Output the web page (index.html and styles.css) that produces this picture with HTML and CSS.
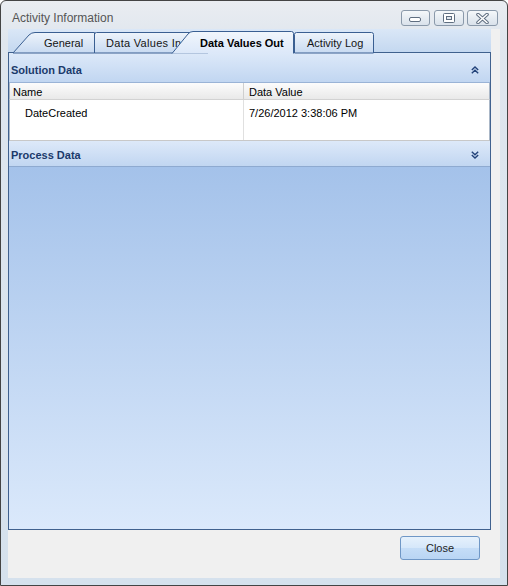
FILE: index.html
```html
<!DOCTYPE html>
<html>
<head>
<meta charset="utf-8">
<link rel="stylesheet" href="styles.css">
</head>
<body>
<div class="window">
  <div class="titlebar">
    <span class="title">Activity Information</span>
    <div class="caption">
      <div class="cbtn cbtn-min">
        <svg width="13" height="6" viewBox="0 0 13 6"><rect x="0.5" y="0.5" width="11" height="4" rx="1.5" fill="#fff" stroke="#5f6e80"/></svg>
      </div>
      <div class="cbtn cbtn-max">
        <svg width="12" height="10" viewBox="0 0 12 10"><rect x="0.5" y="0.5" width="11" height="9" rx="1" fill="#fff" stroke="#5f6e80"/><rect x="3.5" y="3.5" width="5" height="3" fill="#dfe5ec" stroke="#5f6e80"/></svg>
      </div>
      <div class="cbtn cbtn-close">
        <svg width="13" height="11" viewBox="0 0 13 11"><path d="M2,1.5 L11,9.5 M11,1.5 L2,9.5" stroke="#5f6e80" stroke-width="3.6" stroke-linecap="round"/><path d="M2,1.5 L11,9.5 M11,1.5 L2,9.5" stroke="#fff" stroke-width="1.6" stroke-linecap="round"/></svg>
      </div>
    </div>
  </div>
  <div class="client">
    <div class="tabcontrol">
      <div class="tabstrip">
        <svg class="tabs-back" width="483" height="24" viewBox="0 0 483 24">
          <defs>
            <linearGradient id="tg" x1="0" y1="0" x2="0" y2="1">
              <stop offset="0" stop-color="#eef4fb"/>
              <stop offset="1" stop-color="#c8daf1"/>
            </linearGradient>
          </defs>
          <path d="M286.5,24 L286.5,5.5 Q286.5,3.5 288.5,3.5 L363.5,3.5 Q365.5,3.5 365.5,5.5 L365.5,24 Z" fill="url(#tg)" stroke="#3a5f92"/>
          <path d="M86.5,24 L86.5,5.5 Q86.5,3.5 88.5,3.5 L200,3.5 L200,24 Z" fill="url(#tg)" stroke="#3a5f92"/>
          <path d="M5,24 L21,6 Q23.5,3.5 27,3.5 L86.5,3.5 L86.5,24 Z" fill="url(#tg)" stroke="#3a5f92"/>
        </svg>
        <div class="tab tab-general">General</div>
        <div class="tab tab-in">Data Values In</div>
        <div class="tab tab-out">Data Values Out</div>
        <div class="tab tab-log">Activity Log</div>
        <svg class="tabs-front" width="483" height="24" viewBox="0 0 483 24">
          <defs>
            <linearGradient id="sg" x1="0" y1="0" x2="0" y2="1">
              <stop offset="0" stop-color="#f1f6fc"/>
              <stop offset="1" stop-color="#dce8f9"/>
            </linearGradient>
          </defs>
          <path d="M164,24.5 L180,5 Q182,2.5 185,2.5 L283.5,2.5 Q285.5,2.5 285.5,4.5 L285.5,24.5 Z" fill="url(#sg)"/>
          <path d="M164,24.5 L180,5 Q182,2.5 185,2.5 L283.5,2.5 Q285.5,2.5 285.5,4.5 L285.5,24.5" fill="none" stroke="#3a5f92"/>
        </svg>
      </div>
      <div class="page">
        <div class="section-head">
          <span>Solution Data</span>
          <svg class="chev" width="8" height="8" viewBox="0 0 8 8"><path d="M0.8,4 L4,1 L7.2,4 M0.8,7.3 L4,4.3 L7.2,7.3" fill="none" stroke="#23437a" stroke-width="1.4"/></svg>
        </div>
        <div class="grid">
          <div class="grid-head">
            <div class="cell c1">Name</div>
            <div class="cell c2">Data Value</div>
          </div>
          <div class="grid-row">
            <div class="cell c1">DateCreated</div>
            <div class="cell c2">7/26/2012 3:38:06 PM</div>
          </div>
        </div>
        <div class="section-head process">
          <span>Process Data</span>
          <svg class="chev" width="8" height="8" viewBox="0 0 8 8"><path d="M0.8,0.7 L4,3.7 L7.2,0.7 M0.8,4 L4,7 L7.2,4" fill="none" stroke="#23437a" stroke-width="1.4"/></svg>
        </div>
        <div class="fill"></div>
      </div>
    </div>
    <div class="footer">
      <button class="close-btn">Close</button>
    </div>
  </div>
</div>
</body>
</html>
```

FILE: styles.css
```css
body {
  margin: 0;
  background: #ffffff;
  font-family: "Liberation Sans", Arial, sans-serif;
  font-size: 11px;
}

.window {
  width: 508px;
  height: 586px;
  box-sizing: border-box;
  border: 1px solid #444444;
  border-radius: 6px 6px 0 0;
  background: linear-gradient(#eaedf1, #dfe6ee 40px, #d5e1ed);
  display: flex;
  flex-direction: column;
  overflow: hidden;
}

.titlebar {
  height: 28px;
  display: flex;
  align-items: flex-start;
  padding: 0 9px 0 11px;
  box-sizing: border-box;
}

.title {
  flex: 1;
  margin-top: 10px;
  line-height: 14px;
  font-size: 12px;
  color: #555555;
}

.caption {
  display: flex;
  gap: 4px;
  margin-top: 9px;
}

.cbtn {
  height: 16px;
  box-sizing: border-box;
  border: 1px solid #8a99aa;
  border-radius: 3px;
  background: linear-gradient(#f5f8fa, #e6ecf2 50%, #dae2eb);
  display: flex;
  justify-content: center;
  align-items: center;
}

.cbtn-min { width: 29px; align-items: flex-end; padding-bottom: 2px; }
.cbtn-max { width: 30px; }
.cbtn-close { width: 31px; margin-left: -1px; }

.client {
  margin: 0 7px;
  height: 549px;
  background: #f0f0f0;
  display: flex;
  flex-direction: column;
  padding-right: 9px;
}

.tabcontrol {
  width: 483px;
  display: flex;
  flex-direction: column;
}

.tabstrip {
  position: relative;
  height: 23px;
  background: linear-gradient(#dae7f7, #c4d8f0);
  display: flex;
}

.tabs-back,
.tabs-front {
  position: absolute;
  left: 0;
  top: 0;
  overflow: visible;
}

.tabs-back { z-index: 1; }
.tabs-front { z-index: 3; }

.tab {
  position: relative;
  z-index: 2;
  box-sizing: border-box;
  padding-top: 8px;
  line-height: 13px;
  white-space: nowrap;
  color: #141414;
}

.tab-general { margin-left: 5px; width: 81px; padding-left: 31px; }
.tab-in { width: 78px; padding-left: 12px; letter-spacing: 0.3px; }
.tab-out { width: 122px; padding-left: 28px; font-weight: bold; z-index: 4; color: #000; }
.tab-log { width: 79px; padding-left: 13px; }

.page {
  height: 478px;
  box-sizing: border-box;
  border: 1px solid #40618e;
  display: flex;
  flex-direction: column;
}

.section-head {
  height: 30px;
  box-sizing: border-box;
  border-bottom: 1px solid #9ab3d6;
  background: linear-gradient(#dde9f9, #c1d6f1);
  display: flex;
  align-items: center;
  justify-content: space-between;
  padding: 4px 11px 0 2px;
  font-weight: bold;
  color: #1b3a6b;
}

.section-head.process {
  height: 26px;
  padding-top: 3px;
  border-bottom-color: #8eaad0;
}

.grid {
  display: flex;
  flex-direction: column;
}

.grid-head,
.grid-row {
  display: grid;
  grid-template-columns: 234px 1fr;
  border-left: 1px solid #aab7c7;
  border-right: 1px solid #aab7c7;
}

.grid-head {
  height: 17px;
  box-sizing: border-box;
  border-bottom: 1px solid #d2d2d2;
  background: linear-gradient(#fcfcfc, #e9e9e9);
}

.grid-head .cell {
  padding-top: 2px;
  line-height: 14px;
}

.grid-head .c1 { border-right: 1px solid #cfcfcf; }

.grid-row {
  height: 41px;
  box-sizing: border-box;
  border-bottom: 1px solid #c8c8c8;
  background: #ffffff;
}

.grid-row .cell {
  padding-top: 6px;
  line-height: 14px;
}

.grid-row .c1 { border-right: 1px solid #e0e0e0; padding-left: 15px; }

.cell { box-sizing: border-box; color: #000; }
.grid-head .c1 { padding-left: 3px; }
.c2 { padding-left: 5px; }

.fill {
  flex: 1;
  background: linear-gradient(#a4c2ea, #dbe9fb);
}

.footer {
  flex: 1;
  display: flex;
  justify-content: flex-end;
  align-items: flex-start;
  padding: 6px 11px 0 0;
}

.close-btn {
  width: 80px;
  height: 24px;
  margin: 0;
  padding: 0;
  box-sizing: border-box;
  border: 1px solid #6f97c6;
  border-radius: 3px;
  background: linear-gradient(#e6f1fc, #d5e7fa 50%, #c5ddf7 51%, #b9d5f4);
  font-family: "Liberation Sans", Arial, sans-serif;
  font-size: 11px;
  color: #1e1e1e;
}
```
